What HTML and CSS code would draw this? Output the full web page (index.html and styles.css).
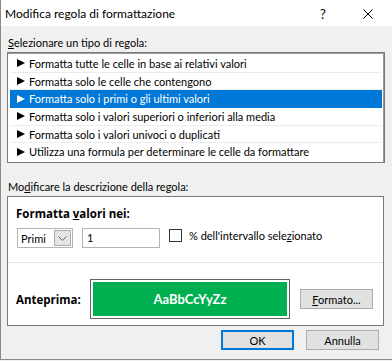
FILE: index.html
```html
<!DOCTYPE html>
<html lang="it">
<head>
  <meta charset="UTF-8">
  <title>Modifica regola di formattazione</title>
  <link rel="stylesheet" href="styles.css">
</head>
<body>
  <div class="window">
    <div class="titlebar">
      <span class="title">Modifica regola di formattazione</span>
      <span class="help">?</span>
      <span class="close">
        <svg width="10" height="10" viewBox="0 0 10 10">
          <path d="M0.5 0.5 L9.5 9.5 M9.5 0.5 L0.5 9.5" stroke="#000" stroke-width="1" fill="none" />
        </svg>
      </span>
    </div>

    <div class="content">
      <p class="label label-first"><u>S</u>elezionare un tipo di regola:</p>
      <ul class="rule-list">
        <li class="rule"><span class="arrow"></span>Formatta tutte le celle in base ai relativi valori</li>
        <li class="rule"><span class="arrow"></span>Formatta solo le celle che contengono</li>
        <li class="rule selected"><span class="arrow"></span>Formatta solo i primi o gli ultimi valori</li>
        <li class="rule"><span class="arrow"></span>Formatta solo i valori superiori o inferiori alla media</li>
        <li class="rule"><span class="arrow"></span>Formatta solo i valori univoci o duplicati</li>
        <li class="rule"><span class="arrow"></span>Utilizza una formula per determinare le celle da formattare</li>
      </ul>

      <p class="label label-second">Mo<u>d</u>ificare la descrizione della regola:</p>
      <div class="group">
        <h3 class="group-title">Formatta <u>v</u>alori nei:</h3>
        <div class="controls">
          <div class="select">
            <span class="select-text">Primi</span>
            <span class="select-btn">
              <svg width="9" height="5" viewBox="0 0 9 5">
                <path d="M0.5 0.5 L4.5 4.5 L8.5 0.5" stroke="#606060" stroke-width="1" fill="none" />
              </svg>
            </span>
          </div>
          <div class="number-input">1</div>
          <span class="checkbox"></span>
          <span class="check-label">% dell'intervallo sele<u>z</u>ionato</span>
        </div>
        <div class="separator"></div>
        <div class="preview-row">
          <span class="preview-label">Anteprima:</span>
          <div class="preview-box">
            <div class="preview-inner">AaBbCcYyZz</div>
          </div>
          <button class="btn btn-format"><u>F</u>ormato...</button>
        </div>
      </div>

      <div class="footer">
        <button class="btn btn-ok">OK</button>
        <button class="btn">Annulla</button>
      </div>
    </div>
  </div>
</body>
</html>
```

FILE: styles.css
```css
* {
  box-sizing: border-box;
  margin: 0;
  padding: 0;
}

body {
  width: 392px;
  height: 361px;
  background: #f0f0f0;
  font-family: Lato, "Liberation Sans", sans-serif;
  font-size: 11px;
  color: #000;
  overflow: hidden;
}

.window {
  height: 360px;
  border-left: 1px solid #8a8a8a;
  border-bottom: 1px solid #8a8a8a;
}

.titlebar {
  height: 26px;
  background: white;
  display: flex;
  align-items: center;
  padding-left: 4px;
}

.title {
  flex: 1;
  font-size: 12px;
  padding-top: 1px;
}

.help {
  width: 43px;
  font-size: 13px;
  padding-top: 1px;
}

.close {
  width: 29px;
  display: flex;
  align-items: center;
  padding-top: 2px;
}

.content {
  padding-left: 6px;
}

.label {
  line-height: 15px;
  padding-left: 1px;
}

.label-first {
  margin-top: 9px;
  margin-bottom: 2px;
}

.rule-list {
  width: 378px;
  height: 111px;
  background: white;
  border: 1px solid #7a7a7a;
  padding: 2px;
  list-style: none;
  display: flex;
  flex-direction: column;
  box-shadow: inset 0 1px 0 #9a9a9a, inset -1px 0 0 #9a9a9a;
}

.rule {
  flex: 1;
  display: flex;
  align-items: center;
  gap: 4px;
  padding-left: 7px;
  border-bottom: 1px solid #ececec;
  white-space: nowrap;
}

.rule:last-child {
  border-bottom: none;
}

.rule.selected {
  background: #0078d7;
  color: white;
  border-bottom-color: #0078d7;
}

.arrow {
  width: 0;
  height: 0;
  border-left: 8px solid #000;
  border-top: 4.5px solid transparent;
  border-bottom: 4.5px solid transparent;
}

.selected .arrow {
  border-left-color: #fff;
}

.label-second {
  margin-top: 16px;
  margin-bottom: 2px;
}

.group {
  width: 377px;
  height: 130px;
  background: white;
  border: 1px solid #7a7a7a;
  padding: 9px 9px 0 8px;
}

.group-title,
.preview-label {
  font-family: "Open Sans", Lato, sans-serif;
  font-size: 11.5px;
  font-weight: bold;
  line-height: 15px;
}

.controls {
  display: flex;
  align-items: center;
  margin-top: 7px;
  height: 20px;
  padding-left: 1px;
}

.select {
  width: 56px;
  height: 20px;
  border: 1px solid #b4b4b4;
  display: flex;
  align-items: center;
  justify-content: space-between;
  padding: 1px 1px 1px 3px;
}

.select-btn {
  width: 17px;
  height: 16px;
  background: #e5e5e5;
  border: 1px solid #acacac;
  display: flex;
  align-items: center;
  justify-content: center;
}

.number-input {
  width: 78px;
  height: 20px;
  margin-left: 9px;
  border: 1px solid #b4b4b4;
  padding-left: 4px;
  line-height: 18px;
}

.checkbox {
  width: 13px;
  height: 13px;
  border: 1px solid #333;
  margin-left: 9px;
  margin-top: -6px;
}

.check-label {
  margin-left: 7px;
  margin-top: -5px;
}

.separator {
  height: 1px;
  background: #e3e3e3;
  margin: 14px -9px 0 -8px;
}

.preview-row {
  display: flex;
  align-items: center;
  margin-top: 16px;
}

.preview-label {
  width: 74px;
}

.preview-box {
  width: 200px;
  height: 40px;
  border: 1px solid #646464;
  padding: 2px;
}

.preview-inner {
  height: 100%;
  background: #00b050;
  color: white;
  font-weight: bold;
  font-size: 13px;
  display: flex;
  align-items: center;
  justify-content: center;
}

.btn {
  height: 20px;
  background: #e1e1e1;
  border: 1px solid #adadad;
  font-family: Lato, "Liberation Sans", sans-serif;
  font-size: 11px;
  color: #000;
}

.btn-format {
  width: 73px;
  margin-left: 10px;
}

.footer {
  display: flex;
  justify-content: flex-end;
  gap: 12px;
  margin-top: 4px;
  padding-right: 13px;
}

.footer .btn {
  width: 73px;
}

.btn-ok {
  border: 2px solid #0078d7;
}
```
